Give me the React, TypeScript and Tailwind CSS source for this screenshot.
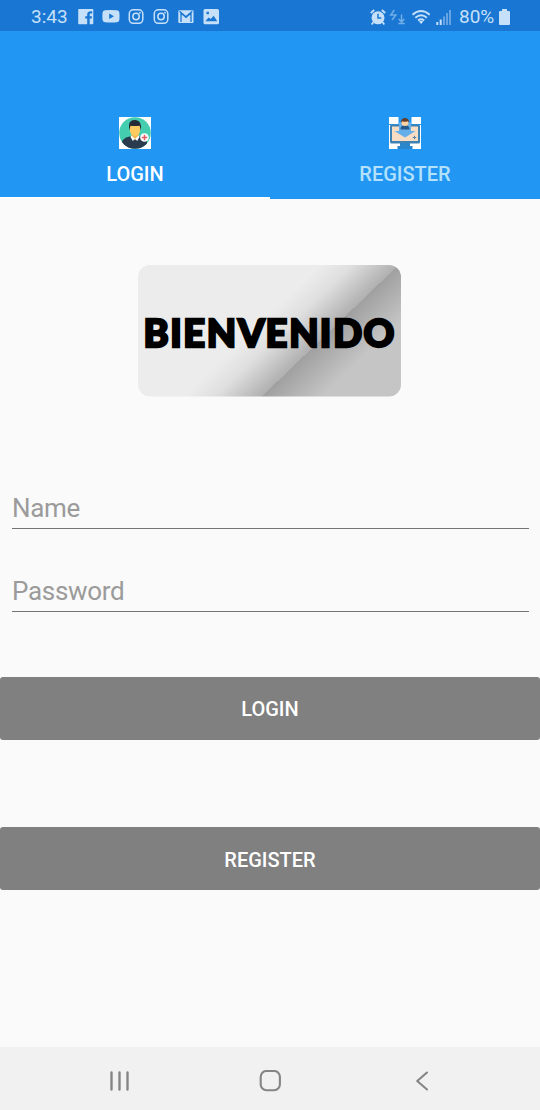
import React from 'react';

function NotificationIcons() {
  return (
    <svg className="ml-[10px] block" width="142" height="16" viewBox="78 9 142 16" fill="#c5e0f8">
      <path d="M79 9h13.500a.8.8 0 0 1 .8.8V23.500a.8.800 0 0 1-.8.8H89.700v-5.700h2l.3-2.400h-2.300v-1.500c0-.7.3-1.100 1.200-1.100h1.300v-2.200c-3.200-.4-5 .6-5 3v1.800h-2v2.400h2v5.700H79a.8.8 0 0 1-.8-.8V9.800A.8.8 0 0 1 79 9Z" />
      <path fillRule="evenodd" d="M105 10.300q6-.5 12 0 2.300.2 2.400 2.500.3 3.500 0 7-.2 2.300-2.400 2.500-6 .5-12 0-2.300-.2-2.500-2.500-.3-3.500 0-7 .2-2.300 2.500-2.500Zm4.200 3.300v5.400l4.800-2.700Z" />
      {[128.500, 153.500].map((x) => (
        <g key={x} transform={`translate(${x} 9)`} fill="none" stroke="#c5e0f8" strokeWidth="1.500">
          <rect x=".8" y=".8" width="13.500" height="13.500" rx="4" />
          <circle cx="7.550" cy="7.550" r="3.200" />
          <circle cx="11.500" cy="3.700" r=".9" fill="#c5e0f8" stroke="none" />
        </g>
      ))}
      <rect x="178.300" y="10.200" width="15.200" height="12.800" rx="1" />
      <path d="M181 22V13l5 4.500 5-4.500v9M179.500 11.300l6.400 5.500 6.400-5.500" fill="none" stroke="#1976d3" strokeWidth="1.300" />
      <path fillRule="evenodd" d="M205 9h12.500q1.500 0 1.500 1.500v12.200q0 1.500-1.500 1.500H205q-1.500 0-1.500-1.500V10.500Q203.500 9 205 9Zm.3 12.300h12l-3.700-5.600-2.800 3.400-2.200-1.600Zm1.200-9.500v2.400h2.400v-2.400Z" />
    </svg>
  );
}

function SystemIcons() {
  return (
    <svg className="block" width="82" height="17" viewBox="370 8 82 17" fill="none" stroke="#c5e0f8">
      <circle cx="378" cy="16.800" r="6.500" fill="#c5e0f8" stroke="none" />
      <path d="m370.800 12 3.400-3M385.200 12l-3.400-3M373.300 21.300l-1.600 2.200M382.700 21.300l1.600 2.200" strokeWidth="1.800" />
      <path d="M378 12.800v4.300h3.300" stroke="#1976d3" strokeWidth="1.500" />
      <g stroke="#72aee8" strokeWidth="1.500">
        <path d="M394.300 9 390.800 13.900h5l-3.800 5.100" />
        <path d="M401.500 13.500v7.500M398.700 18l2.800 2.900 2.800-2.900M398.300 22.500h6.500" />
      </g>
      <g strokeWidth="1.900">
        <path d="M412.500 13.700q8.600-7.200 17.200 0M415.300 16.700q5.800-4.800 11.600 0M418 19.400q3.100-2.400 6.200 0" />
      </g>
      <path d="m418.900 20.500 2.200 2.400 2.200-2.400q-2.200-1.500-4.400 0Z" fill="#c5e0f8" stroke="none" />
      <path d="M437.300 21v3M440.700 18.500V24" strokeWidth="2" />
      <path d="M444 15.500V24M447 12v12M450 9v15" stroke="#69a6e4" strokeWidth="1.900" />
    </svg>
  );
}

function StatusBar() {
  return (
    <header className="flex h-[31px] items-center bg-[#1976d3] pl-[31px] pr-[30px] pt-[3px] text-[19px] leading-[28px] text-[#c5e0f8]">
      <span className="w-[37px]">3:43</span>
      <NotificationIcons />
      <div className="ml-auto flex items-center">
        <SystemIcons />
        <span className="ml-[7px] w-[37px]">80%</span>
        <svg className="ml-[3px] block" width="11" height="16" viewBox="0 0 11 16" fill="#c5e0f8">
          <path d="M3 0h5v2h2q1 0 1 1v12q0 1-1 1H1q-1 0-1-1V3q0-1 1-1h2Z" />
        </svg>
      </div>
    </header>
  );
}

function PersonIcon() {
  return (
    <svg width="32" height="32" viewBox="0 0 32 32">
      <path fill="#fff" d="M0 0h32v32H0z" />
      <clipPath id="avatar"><circle cx="16" cy="16" r="15.800" /></clipPath>
      <g clipPath="url(#avatar)">
        <path fill="#45cdb0" d="M0 0h32v32H0z" />
        <path d="M3 32V25q0-3.500 9-6h8q8 2.500 8 6v7Z" fill="#293b4d" />
        <path d="M12.500 15h7v5l-3.500 3-3.500-3Z" fill="#f3b64d" />
        <path d="m12 18.300 4 3.500-2.200 2.200-2.300-4ZM20 18.300l-4 3.500 2.200 2.200 2.300-4Z" fill="#fff" />
        <path d="M10.800 8h10.400v4.500q0 5.500-5.200 6.700-5.200-1.200-5.200-6.700Z" fill="#ffcb60" />
        <path d="M10 13.500V8.500Q10 3 16 3q7-.3 6 10.500l-1.400-4.700q-5.200.4-9 0Z" fill="#252a38" />
      </g>
      <circle cx="25.500" cy="20.500" r="4.300" fill="#fff" />
      <path d="M25.500 17.800v5.400M22.800 20.500h5.400" stroke="#e15b60" strokeWidth="1.500" />
    </svg>
  );
}

function ComputerIcon() {
  return (
    <svg width="32" height="32" viewBox="0 0 32 32">
      <path fill="#fff" d="M0 0h32v32H0z" />
      <path fill="#2196f3" d="M9.500 0h13v8h-13zM0 7h32v1H0z" />
      <rect x="1" y="7.500" width="30" height="19" rx="1.500" fill="#3e82b3" />
      <path fill="#2a87cc" d="M11 26h10v3h2.500v3H8.500v-3H11z" />
      <path fill="#f7ddc4" d="M3 9.500h26v14.500H3z" />
      <path d="M10 5.500h12V14h4.500L16 20.500 5.500 14H10Z" fill="#64afea" />
      <path d="M11.500 12.500q0-4.500 4.500-4.500t4.500 4.500Z" fill="#245b8c" />
      <circle cx="16" cy="5.500" r="3.500" fill="#ffd2a1" />
      <path d="M12 5.500q0-4.500 4-4.500t4 4.500l-1.500-1.300q-2.800 1-5 0Z" fill="#63402d" />
      <path d="M25.500 18.800v3.400M23.800 20.500h3.400" stroke="#587eaa" strokeWidth="1" />
    </svg>
  );
}

function Tab({ label, active, children }: { label: string; active?: boolean; children: React.ReactNode }) {
  return (
    <button
      className={
        'flex h-[168px] flex-1 flex-col items-center border-b-2 pt-[86px] text-[20px] font-medium leading-[24px] ' +
        (active ? 'border-white text-white' : 'border-[#2196f3] text-[#b4e1fb]')
      }
    >
      {children}
      <span className="mt-[13px]">{label}</span>
    </button>
  );
}

function WelcomeBanner() {
  return (
    <svg className="ml-[138px] mt-[66px] block overflow-visible" width="263" height="132" viewBox="0 0 263 132">
      <defs>
        <linearGradient id="sheen" gradientUnits="userSpaceOnUse" x1="149.400" y1="23.700" x2="232.600" y2="110.300">
          <stop offset="0.05" stopColor="#ececec" />
          <stop offset="0.23" stopColor="#dfdfdf" />
          <stop offset="0.5" stopColor="#b0b0b0" />
          <stop offset="0.5" stopColor="#a0a0a0" />
          <stop offset="0.85" stopColor="#c5c5c5" />
        </linearGradient>
      </defs>
      <rect width="263" height="131.500" rx="12" fill="url(#sheen)" />
      <text
        x="5.500 32.300 45.200 68.800 100 127.500 151.200 181.800 195.200 225.500"
        y="82"
        className="fill-black stroke-black font-['Lato',sans-serif] text-[38px] font-black"
        strokeWidth="2.400"
      >
        BIENVENIDO
      </text>
    </svg>
  );
}

const inputClass =
  'block h-[46px] w-full border-b border-[#747474] bg-transparent pt-[5px] text-[26px] tracking-[-0.3px] text-[#555] outline-none placeholder:text-[#9b9b9b] placeholder:opacity-100';
const buttonClass =
  'block h-[63px] w-full rounded-[3px] bg-[#808080] text-[20px] font-medium leading-[24px] text-white';

export default function App() {
  return (
    <div className="flex h-[1110px] w-[540px] flex-col overflow-hidden bg-[#fafafa] font-['Roboto',sans-serif]">
      <StatusBar />
      <nav className="flex bg-[#2196f3]">
        <Tab label="LOGIN" active><PersonIcon /></Tab>
        <Tab label="REGISTER"><ComputerIcon /></Tab>
      </nav>
      <main className="flex-1">
        <WelcomeBanner />
        <form className="mt-[86px]" onSubmit={(e) => e.preventDefault()}>
          <div className="ml-3 mr-[11px] flex flex-col gap-[37px]">
            <input className={inputClass} placeholder="Name" />
            <input className={inputClass} type="password" placeholder="Password" />
          </div>
          <div className="mt-[65px] flex flex-col gap-[87px]">
            <button className={`${buttonClass} pt-[1px]`}>LOGIN</button>
            <button type="button" className={`${buttonClass} pt-[2px]`}>REGISTER</button>
          </div>
        </form>
      </main>
      <footer className="flex h-[63px] items-center bg-[#f1f1f1] pl-[109px] pt-[4px]">
        <svg width="21" height="20" viewBox="0 0 21 20" fill="none" stroke="#858585" strokeWidth="2.400" strokeLinecap="round">
          <path d="M2.500 1.500v17M10.500 1.500v17M18.500 1.500v17" />
        </svg>
        <svg className="ml-[129px]" width="22" height="22" viewBox="0 0 22 22" fill="none" stroke="#858585" strokeWidth="2.100">
          <rect x="1.700" y="1" width="19.200" height="19.200" rx="5.800" />
        </svg>
        <svg className="ml-[134px]" width="14" height="20" viewBox="0 0 14 20" fill="none" stroke="#858585" strokeWidth="2.100" strokeLinecap="round" strokeLinejoin="round">
          <path d="M12 1.500 2.200 10l9.800 8.500" />
        </svg>
      </footer>
    </div>
  );
}
